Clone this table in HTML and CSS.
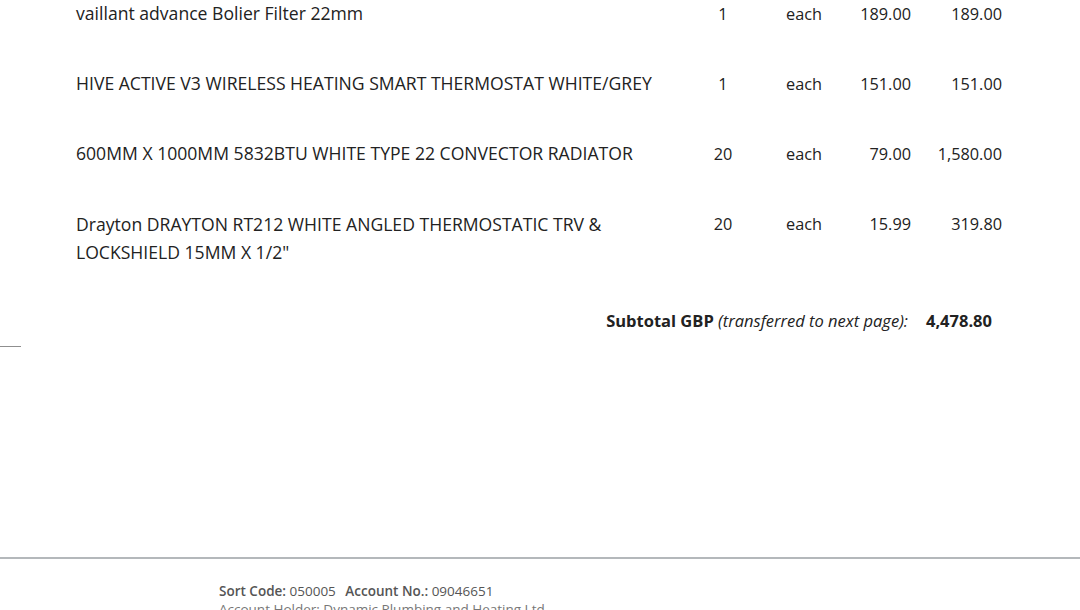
FILE: index.html
```html
<!DOCTYPE html>
<html>
<head>
<meta charset="utf-8">
<link rel="stylesheet" href="styles.css">
</head>
<body>
<div class="page">
  <div class="items">
    <div class="row">
      <div class="desc">vaillant advance Bolier Filter 22mm</div>
      <div class="qty">1</div>
      <div class="unit">each</div>
      <div class="price">189.00</div>
      <div class="total">189.00</div>
    </div>
    <div class="row">
      <div class="desc">HIVE ACTIVE V3 WIRELESS HEATING SMART THERMOSTAT WHITE/GREY</div>
      <div class="qty">1</div>
      <div class="unit">each</div>
      <div class="price">151.00</div>
      <div class="total">151.00</div>
    </div>
    <div class="row">
      <div class="desc">600MM X 1000MM 5832BTU WHITE TYPE 22 CONVECTOR RADIATOR</div>
      <div class="qty">20</div>
      <div class="unit">each</div>
      <div class="price">79.00</div>
      <div class="total">1,580.00</div>
    </div>
    <div class="row">
      <div class="desc">Drayton DRAYTON RT212 WHITE ANGLED THERMOSTATIC TRV &amp;<br>LOCKSHIELD 15MM X 1/2"</div>
      <div class="qty">20</div>
      <div class="unit">each</div>
      <div class="price">15.99</div>
      <div class="total">319.80</div>
    </div>
  </div>
  <div class="subtotal">
    <span class="sub-label"><b>Subtotal GBP</b> <i>(transferred to next page):</i></span>
    <b class="sub-value">4,478.80</b>
  </div>
  <div class="tick"></div>
  <div class="spacer"></div>
  <div class="footer">
    <div class="bank"><b>Sort Code:</b> 050005 <span class="gap"></span><b>Account No.:</b> 09046651</div>
    <div class="bank second">Account Holder: Dynamic Plumbing and Heating Ltd</div>
  </div>
</div>
</body>
</html>
```
FILE: styles.css
```css
html, body {
  margin: 0;
  padding: 0;
  background: #ffffff;
}
body {
  font-family: "Open Sans", "Liberation Sans", sans-serif;
  color: #222222;
  width: 1080px;
  height: 610px;
  overflow: hidden;
}
.page {
  display: flex;
  flex-direction: column;
}
.items {
  display: flex;
  flex-direction: column;
  padding-left: 76px;
}
.row {
  display: grid;
  grid-template-columns: 604px 86px 76px 69px 91px;
  font-size: 16.3px;
  line-height: 28px;
  padding-bottom: 42px;
}
.desc {
  font-size: 17.6px;
  margin-top: -1px;
}
.row:last-child .desc {
  margin-top: 0;
}
.qty, .unit {
  text-align: center;
}
.price, .total {
  text-align: right;
}
.subtotal {
  display: flex;
  justify-content: flex-end;
  align-items: baseline;
  gap: 18px;
  padding-right: 88px;
  margin-top: 2px;
  font-size: 16.5px;
  line-height: 22px;
  height: 22px;
}
.sub-label b {
  font-weight: 700;
}
.sub-label i {
  font-style: italic;
}
.tick {
  margin-top: 14px;
  width: 21px;
  height: 1px;
  background: #8f8f8f;
}
.spacer {
  height: 210px;
}
.footer {
  border-top: 2px solid #b4b8bb;
  padding-top: 24px;
  padding-left: 219px;
}
.bank {
  font-size: 13.5px;
  line-height: 17px;
  color: #555555;
}
.bank b {
  font-weight: 600;
}
.second {
  color: #777777;
  margin-top: 1px;
}
.gap {
  display: inline-block;
  width: 6px;
}
```
